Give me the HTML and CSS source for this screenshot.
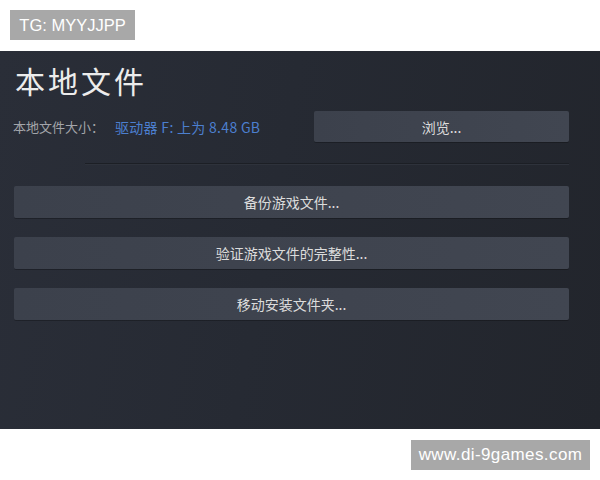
FILE: index.html
```html
<!DOCTYPE html>
<html lang="zh-CN">
<head>
<meta charset="utf-8">
<title>本地文件</title>
<link rel="stylesheet" href="styles.css">
</head>
<body>
<div class="top">
  <span class="tag tg">TG: MYYJJPP</span>
</div>
<section class="panel">
  <h1 class="title">本地文件</h1>
  <div class="size-row">
    <span class="size-label">本地文件大小：</span>
    <span class="size-value">驱动器 F: 上为 8.48 GB</span>
    <button class="btn browse">浏览...</button>
  </div>
  <div class="sep"></div>
  <div class="actions">
    <button class="btn">备份游戏文件...</button>
    <button class="btn">验证游戏文件的完整性...</button>
    <button class="btn">移动安装文件夹...</button>
  </div>
</section>
<div class="bottom">
  <span class="tag site">www.di-9games.com</span>
</div>
</body>
</html>
```
FILE: styles.css
```css
* { box-sizing: border-box; }
html, body { margin: 0; padding: 0; background: #ffffff; }
body {
  width: 600px;
  height: 480px;
  overflow: hidden;
  font-family: "Noto Sans CJK SC", "Noto Sans", sans-serif;
}
.top {
  padding: 10px 10px 11px 10px;
  display: flex;
}
.tag {
  display: inline-block;
  background: #a8a8a8;
  color: #ffffff;
  font-family: "Liberation Sans", Arial, sans-serif;
  line-height: 30px;
  height: 30px;
  text-align: center;
  white-space: nowrap;
}
.tg {
  width: 125px;
  font-size: 16.5px;
}
.site {
  width: 179px;
  font-size: 17px;
  letter-spacing: 0.4px;
}
.panel {
  height: 378px;
  background: linear-gradient(100deg, #2a2e38 0%, #262a33 45%, #22252c 100%);
  padding: 13px 31px 0 13px;
}
.title {
  margin: 0;
  font-weight: 400;
  font-size: 30px;
  line-height: 32px;
  letter-spacing: 3px;
  color: #ececec;
  padding-left: 2px;
}
.size-row {
  margin-top: 15px;
  display: flex;
  align-items: center;
  height: 31px;
}
.size-label {
  font-size: 13px;
  color: #a3a5aa;
}
.size-value {
  font-size: 14px;
  letter-spacing: 0.3px;
  color: #4c7fcf;
  margin-left: 11px;
}
.btn {
  display: block;
  border: none;
  margin: 0;
  padding: 0;
  height: 32px;
  background: linear-gradient(90deg, #3c414c 0%, #414651 100%);
  color: #dcdcdc;
  font-family: "Noto Sans CJK SC", "Noto Sans", sans-serif;
  font-size: 14px;
  text-align: center;
  border-radius: 2px;
  box-shadow: 0 1px 0 rgba(0,0,0,0.25);
}
.browse {
  margin-left: auto;
  width: 255px;
  height: 31px;
}
.sep {
  margin: 21px 0 0 72px;
  height: 2px;
  border-top: 1px solid #1c1f25;
  border-bottom: 1px solid #2e323b;
}
.actions {
  margin-top: 21px;
  padding-left: 1px;
  display: flex;
  flex-direction: column;
  gap: 19px;
}
.actions .btn { width: 555px; }
.bottom {
  display: flex;
  justify-content: flex-end;
  padding: 11px 10px 0 0;
}
```
